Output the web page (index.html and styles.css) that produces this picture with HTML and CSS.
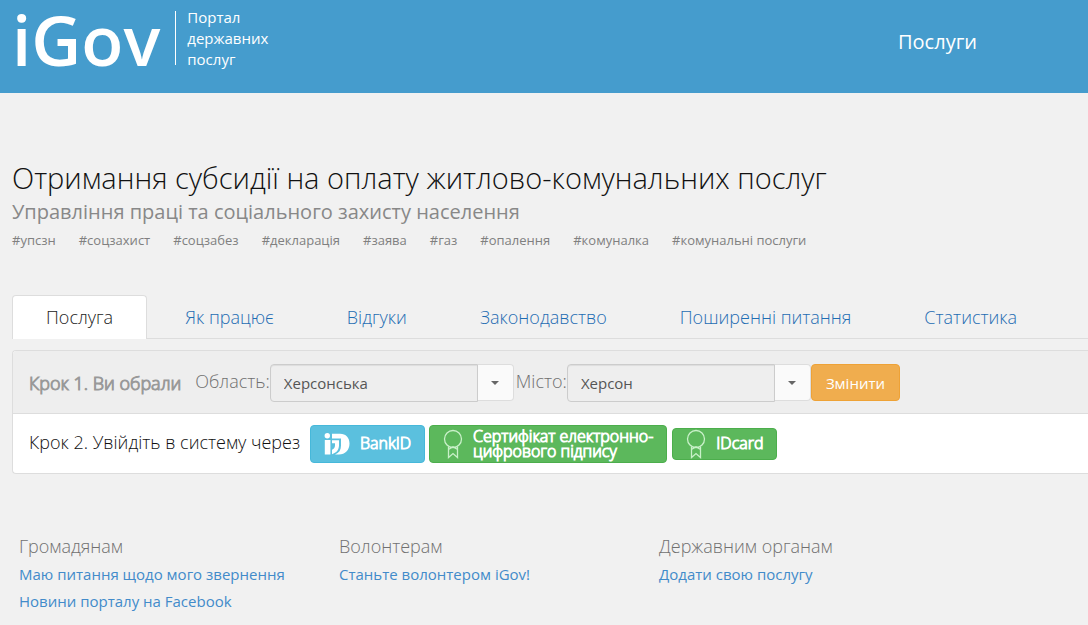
FILE: index.html
```html
<!DOCTYPE html>
<html lang="uk">
<head>
<meta charset="utf-8">
<title>iGov — Портал державних послуг</title>
<link rel="stylesheet" href="styles.css">
</head>
<body>
<header class="header">
  <a class="brand" href="#">
    <span class="brand-name">iGov</span>
    <span class="brand-tagline">Портал<br>державних<br>послуг</span>
  </a>
  <nav class="header-nav"><a class="header-link" href="#">Послуги</a></nav>
</header>
<main class="content">
  <h1 class="title">Отримання субсидії на оплату житлово-комунальних послуг</h1>
  <p class="subtitle">Управління праці та соціального захисту населення</p>
  <ul class="tags">
    <li>#упсзн</li><li>#соцзахист</li><li>#соцзабез</li><li>#декларація</li><li>#заява</li><li>#газ</li><li>#опалення</li><li>#комуналка</li><li>#комунальні послуги</li>
  </ul>
  <nav class="tabs">
    <a class="tab tab-active" href="#">Послуга</a>
    <a class="tab" href="#">Як працює</a>
    <a class="tab" href="#">Відгуки</a>
    <a class="tab" href="#">Законодавство</a>
    <a class="tab" href="#">Поширенні питання</a>
    <a class="tab" href="#">Статистика</a>
  </nav>
  <section class="panel">
    <div class="step step-done">
      <strong class="step-title">Крок 1. Ви обрали</strong>
      <label class="field-label" for="region">Область:</label>
      <div class="combo">
        <input class="combo-input" id="region" type="text" value="Херсонська" readonly>
        <button class="combo-toggle" type="button" aria-label="Обрати область"><span class="caret"></span></button>
      </div>
      <label class="field-label" for="city">Місто:</label>
      <div class="combo">
        <input class="combo-input" id="city" type="text" value="Херсон" readonly>
        <button class="combo-toggle" type="button" aria-label="Обрати місто"><span class="caret"></span></button>
      </div>
      <button class="btn btn-change" type="button">Змінити</button>
    </div>
    <div class="step step-current">
      <span class="step-text">Крок 2. Увійдіть в систему через</span>
      <button class="btn btn-auth btn-bank" type="button">
        <svg class="bank-icon" viewBox="0 0 26 22" aria-hidden="true"><circle cx="3.300" cy="2.800" r="2.700"/><path d="M.8 7h5.600v14.500H.8z"/><path d="M8 .8h8c6 0 9.500 4 9.500 9.700 0 6.700-4.500 11-10.500 11H11c4-1.500 6-4.500 6-9V5.500H8z"/><path d="M8 7.300h7v5c0 4.500-2.500 7.500-7 9v-4.500c2-1 3-2.300 3-4.500v-2H8z"/></svg>
        <span>BankID</span>
      </button>
      <button class="btn btn-auth btn-sign" type="button">
        <svg class="badge-icon" viewBox="0 0 20 30" aria-hidden="true"><circle cx="10" cy="10" r="8.500"/><path d="M5.500 17.500V28.500L10 24.500L14.500 28.500V17.500M5.500 20.500L10 17.800L14.500 20.500"/></svg>
        <span>Сертифікат електронно-<br>цифрового підпису</span>
      </button>
      <button class="btn btn-auth btn-card" type="button">
        <svg class="badge-icon" viewBox="0 0 20 30" aria-hidden="true"><circle cx="10" cy="10" r="8.500"/><path d="M5.500 17.500V28.500L10 24.500L14.500 28.500V17.500M5.500 20.500L10 17.800L14.500 20.500"/></svg>
        <span>IDcard</span>
      </button>
    </div>
  </section>
</main>
<footer class="footer">
  <section class="footer-col">
    <h2 class="footer-title">Громадянам</h2>
    <a href="#">Маю питання щодо мого звернення</a>
    <a href="#">Новини порталу на Facebook</a>
  </section>
  <section class="footer-col">
    <h2 class="footer-title">Волонтерам</h2>
    <a href="#">Станьте волонтером iGov!</a>
  </section>
  <section class="footer-col">
    <h2 class="footer-title">Державним органам</h2>
    <a href="#">Додати свою послугу</a>
  </section>
</footer>
</body>
</html>
```
FILE: styles.css
```css
* { box-sizing: border-box; }
body {
  margin: 0;
  background: #f1f1f1;
  color: #333;
  font-family: "Open Sans", "Noto Sans", sans-serif;
  font-size: 15px;
  overflow-x: hidden;
}
a { color: #428bca; text-decoration: none; }
button, input { font-family: inherit; }

.header {
  display: flex;
  justify-content: space-between;
  align-items: flex-start;
  background: #459ccd;
  padding: 0 111px 15px 12px;
}
.brand { display: flex; color: #fff; }
.brand-name {
  font-size: 69px;
  font-weight: 600;
  line-height: 78px;
}
.brand-tagline {
  align-self: flex-start;
  display: flex;
  align-items: center;
  border-left: 1px solid #fff;
  margin: 11px 0 0 15px;
  padding-left: 11px;
  height: 54px;
  font-size: 15px;
  line-height: 21px;
}
.header-link { display: block; color: #fff; font-size: 20px; line-height: 28px; padding-top: 28px; }

.content { padding: 67px 0 0 12px; }
.title { margin: 0; color: #111; font-size: 29px; line-height: 36px; font-weight: 300; }
.subtitle { margin: 0; font-size: 20px; line-height: 32px; color: #888; }
.tags {
  display: flex;
  flex-wrap: wrap;
  gap: 0 23px;
  margin: 2px 0 0;
  padding: 0;
  list-style: none;
  font-size: 13px;
  line-height: 20px;
  color: #808080;
}
.tabs {
  display: flex;
  margin-top: 45px;
  border-bottom: 1px solid #ddd;
}
.tab {
  padding: 8px 34px;
  margin-right: 3px;
  border: 1px solid transparent;
  border-bottom: 0;
  border-radius: 4px 4px 0 0;
  color: #1f6db3;
  font-size: 18px;
  font-weight: 300;
  line-height: 26px;
  white-space: nowrap;
}
.tab-active {
  background: #fff;
  border-color: #ddd;
  color: #222;
  padding: 8px 33px;
  margin-bottom: -1px;
}
.panel {
  margin-top: 11px;
  border: 1px solid #ddd;
  border-right: 0;
  border-radius: 4px 0 0 4px;
  background: #fff;
  overflow: hidden;
}
.step { display: flex; padding: 0 16px; font-size: 18px; font-weight: 300; white-space: nowrap; }
.step-done { align-items: flex-start; padding-top: 13px; height: 63px; background: #eee; color: #707070; border-bottom: 1px solid #ddd; }
.step-title { margin-right: 14px; font-weight: 300; line-height: 38px; color: #999; -webkit-text-stroke: 1px #999; }
.field-label { line-height: 34px; }
.combo { display: flex; width: 244px; margin-right: 2px; }
.combo-input {
  flex: 1;
  min-width: 0;
  height: 38px;
  padding: 0 13px;
  border: 1px solid #ccc;
  border-radius: 4px 0 0 4px;
  background: #eee;
  box-shadow: inset 0 1px 1px rgba(0, 0, 0, .075);
  color: #555;
  font-size: 15px;
}
.combo-toggle {
  display: grid;
  place-items: center;
  width: 36px;
  height: 37px;
  padding: 0;
  border: 1px solid #ddd;
  border-left: 0;
  border-radius: 0 4px 4px 0;
  background: #fafafa;
}
.caret { border: 4px solid transparent; border-top: 4px solid #666; border-bottom: 0; }
.btn {
  border: 1px solid;
  border-radius: 4px;
  color: #fff;
  white-space: nowrap;
}
.btn-change {
  height: 37px;
  margin-left: -2px;
  padding: 0 14px;
  background: #f0ad4e;
  border-color: #eea236;
  font-size: 15px;
}
.step-current { align-items: center; height: 59px; gap: 4px; }
.step-text { padding: 0 6px 4px 0; color: #111; }
.btn-auth {
  display: flex;
  align-items: center;
  height: 38px;
  padding: 0 13px;
  font-size: 16px;
  font-weight: 300;
  -webkit-text-stroke: 1px #fff;
  line-height: 15px;
  text-align: left;
}
.btn-bank { background: #5bc0de; border-color: #46b8da; gap: 10px; }
.btn-sign { background: #5cb85c; border-color: #4cae4c; gap: 10px; }
.btn-card { background: #5cb85c; border-color: #4cae4c; gap: 10px; height: 32px; margin-left: 1px; }
.bank-icon { width: 26px; height: 22px; fill: #fff; }
.badge-icon { width: 20px; height: 30px; fill: none; stroke: #c9f0c9; stroke-width: 1.300; }

.footer {
  display: grid;
  grid-template-columns: 320px 320px 1fr;
  padding: 58px 0 8px 19px;
}
.footer-col { display: flex; flex-direction: column; align-items: flex-start; line-height: 27px; }
.footer-title { margin: 0; color: #707070; font-size: 18px; font-weight: 300; line-height: 29px; }
```
